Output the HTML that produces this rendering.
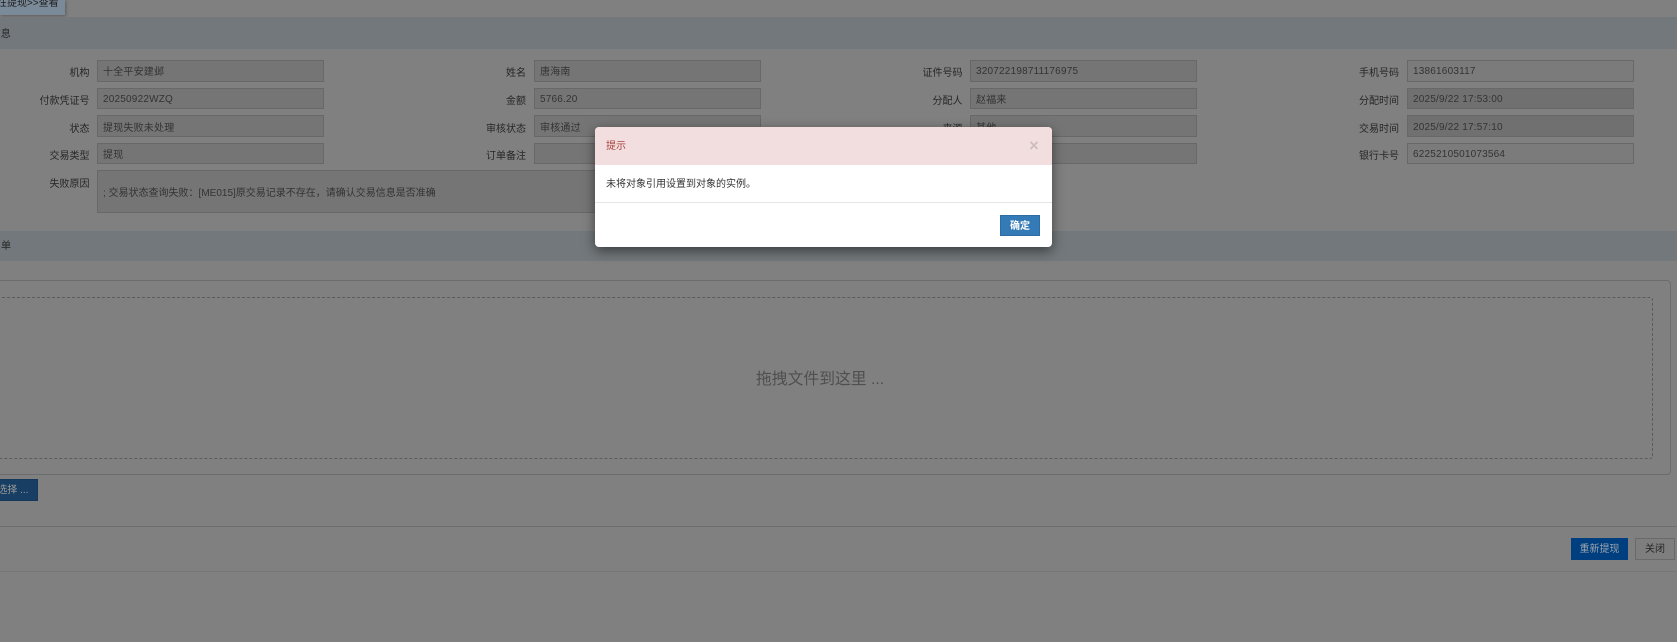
<!DOCTYPE html>
<html lang="zh">
<head>
<meta charset="utf-8">
<title>提现查看</title>
<style>
html,body{margin:0;padding:0;width:1677px;height:642px;overflow:hidden;background:#808080}
body{position:relative;font-family:"Liberation Sans","Noto Sans CJK SC",sans-serif;font-size:10px;color:#262626}
.a{position:absolute;box-sizing:border-box;white-space:nowrap}
.bar{left:0;width:1677px;background:#72787b}
.l{text-align:right;width:70px;line-height:14px;color:#262626}
.i{border:1px solid #686868;background:#757575;padding-left:5px;color:#333;letter-spacing:.2px;display:flex;align-items:center;width:227px}
.i span{position:relative;top:1px}
.i b{position:relative;top:-1px;font-weight:normal}
.c1{left:97px}.c2{left:534px}.c3{left:970px}.c4{left:1407px}
.l1{left:19.5px}.l2{left:456px}.l3{left:892.5px}.l4{left:1329px}
.r1{top:60px;height:22px}.r2{top:88px;height:21px}.r3{top:115px;height:22px}.r4{top:143px;height:21px}
.w{background:#7b7b7b}
.d{background:#707070}
</style>
</head>
<body>
<div class="a" style="left:0;top:0;width:65px;height:15px;background:#7b8a99;box-shadow:1px 1px 3px rgba(0,0,0,.3)"></div>
<div class="a" style="left:-3px;top:-3px;line-height:14px;color:#1c1c1c">在提现&gt;&gt;查看</div>

<div class="a bar" style="top:17px;height:32px"></div>
<div class="a" style="left:-9.3px;top:28px;line-height:14px">信息</div>

<!-- row 1 -->
<div class="a l l1" style="top:67px">机构</div>
<div class="a i c1 r1"><b>十全平安建邺</b></div>
<div class="a l l2" style="top:67px">姓名</div>
<div class="a i c2 r1"><b>唐海南</b></div>
<div class="a l l3" style="top:67px">证件号码</div>
<div class="a i c3 r1">320722198711176975</div>
<div class="a l l4" style="top:67px">手机号码</div>
<div class="a i w c4 r1">13861603117</div>

<!-- row 2 -->
<div class="a l l1" style="top:95px">付款凭证号</div>
<div class="a i c1 r2"><span>20250922WZQ</span></div>
<div class="a l l2" style="top:95px">金额</div>
<div class="a i c2 r2"><span>5766.20</span></div>
<div class="a l l3" style="top:95px">分配人</div>
<div class="a i c3 r2">赵福来</div>
<div class="a l l4" style="top:95px">分配时间</div>
<div class="a i d c4 r2"><span>2025/9/22 17:53:00</span></div>

<!-- row 3 -->
<div class="a l l1" style="top:123px">状态</div>
<div class="a i c1 r3">提现失败未处理</div>
<div class="a l l2" style="top:123px">审核状态</div>
<div class="a i c2 r3">审核通过</div>
<div class="a l l3" style="top:123px">来源</div>
<div class="a i c3 r3">其他</div>
<div class="a l l4" style="top:123px">交易时间</div>
<div class="a i d c4 r3"><span>2025/9/22 17:57:10</span></div>

<!-- row 4 -->
<div class="a l l1" style="top:150px">交易类型</div>
<div class="a i c1 r4">提现</div>
<div class="a l l2" style="top:150px">订单备注</div>
<div class="a i c2 r4"></div>
<div class="a i c3 r4"></div>
<div class="a l l4" style="top:150px">银行卡号</div>
<div class="a i w c4 r4"><span>6225210501073564</span></div>

<!-- row 5 -->
<div class="a l l1" style="top:178px">失败原因</div>
<div class="a i c1" style="top:170px;width:664px;height:43px;letter-spacing:0">; 交易状态查询失败：[ME015]原交易记录不存在，请确认交易信息是否准确</div>

<div class="a bar" style="top:231px;height:30px"></div>
<div class="a" style="left:1px;top:240px;line-height:14px">单</div>

<!-- upload -->
<div class="a" style="left:-8px;top:280px;width:1679px;height:195px;border:1px solid #6c6c6c;border-radius:4px"></div>
<div class="a" style="left:-6px;top:297px;width:1659px;height:162px;border:1px dashed #5c5c5c;border-radius:3px"></div>
<div class="a" style="left:756px;top:370px;font-size:15.8px;line-height:20px;color:#4f4f4f">拖拽文件到这里 ...</div>

<div class="a" style="left:-20px;top:479px;width:58px;height:22px;background:#183f63;border:1px solid #14375a"></div>
<div class="a" style="left:-2.7px;top:484px;line-height:14px;color:#9a9a9a">选择 ...</div>

<div class="a" style="left:0;top:526px;width:1677px;height:1px;background:#6e6e6e"></div>
<div class="a" style="left:0;top:571px;width:1677px;height:1px;background:#767676"></div>

<div class="a" style="left:1571px;top:538px;width:57px;height:22px;background:#003f7f;color:#9aa3ad;text-align:center;line-height:24px">重新提现</div>
<div class="a" style="left:1635px;top:538px;width:40px;height:22px;border:1px solid #6a6a6a;background:#7e7e7e;color:#262626;text-align:center;line-height:22px">关闭</div>

<!-- modal -->
<div class="a" style="left:595px;top:127px;width:457px;height:120px;background:#fff;border-radius:4px;box-shadow:0 4px 12px rgba(0,0,0,.5);overflow:hidden">
  <div class="a" style="left:0;top:0;width:457px;height:38px;background:#f2dede"></div>
  <div class="a" style="left:11px;top:13px;line-height:14px;color:#a94442">提示</div>
  <div class="a" style="left:429px;top:10px;width:20px;text-align:center;line-height:18px;font-size:16.5px;font-weight:bold;color:#cdbebe">×</div>
  <div class="a" style="left:11px;top:51px;line-height:14px;color:#333">未将对象引用设置到对象的实例。</div>
  <div class="a" style="left:0;top:75px;width:457px;height:1px;background:#e5e5e5"></div>
  <div class="a" style="left:405px;top:88px;width:40px;height:21px;background:#337ab7;border:1px solid #2e6da4;color:#fff;text-align:center;line-height:21px;font-weight:bold">确定</div>
</div>
</body>
</html>
